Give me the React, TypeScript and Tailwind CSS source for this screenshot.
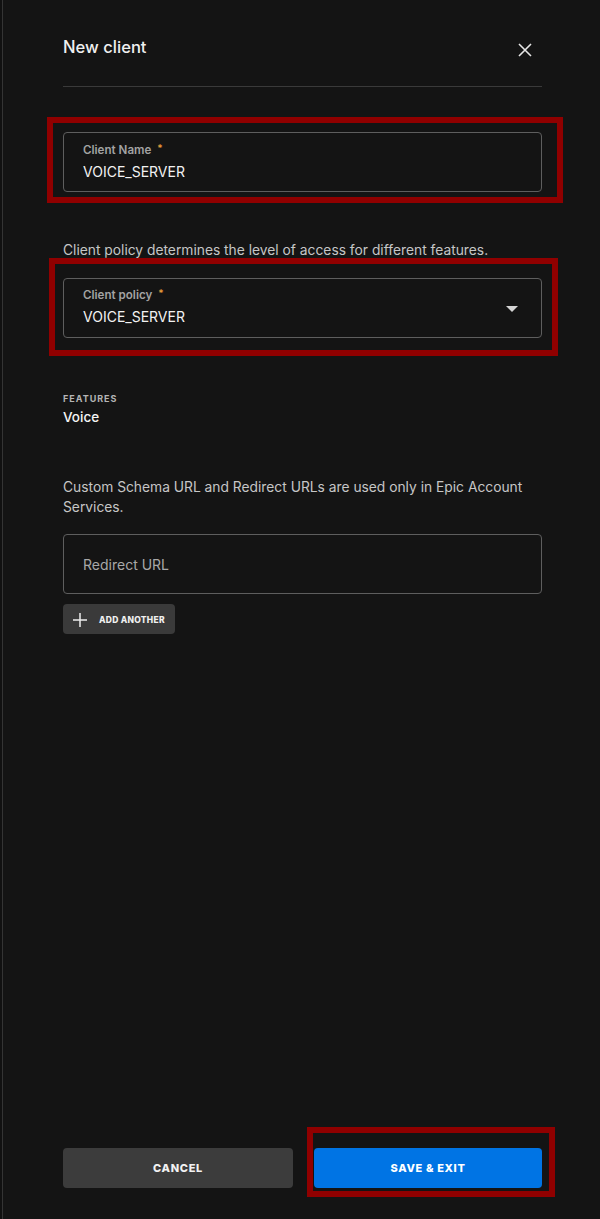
import { useState } from "react"

const font = { fontFamily: "Inter, 'Noto Sans', 'Liberation Sans', sans-serif" }

function Highlight({ className }: { className: string }) {
  return (
    <div
      className={`pointer-events-none absolute border-[6px] border-[#900000] ${className}`}
    />
  )
}

function FieldLabel({ text }: { text: string }) {
  return (
    <div className="flex items-start text-[11.6px] leading-[14px] font-semibold text-[#a3a3a3]">
      {text}
      <span className="ml-[6px] text-[10px] leading-[10px] text-[#e59a3a]">*</span>
    </div>
  )
}

export default function App() {
  const [name, setName] = useState("VOICE_SERVER")

  return (
    <div className="flex h-[1219px] bg-[#141414]" style={font}>
      <div className="w-[2px] bg-[#111111]" />
      <div className="w-px bg-[#343434]" />
      <div className="flex flex-1 flex-col pr-[58px] pl-[60px]">
        {/* header */}
        <div className="flex items-start justify-between pt-[37px]">
          <h2 className="text-[16.6px] leading-[20px] font-medium text-[#f0f0f0]">
            New client
          </h2>
          <button className="mt-[6px] mr-[10px] text-[#e6e6e6]">
            <svg width="14" height="14" viewBox="0 0 14 14" fill="none">
              <path
                d="M1 1L13 13M13 1L1 13"
                stroke="currentColor"
                strokeWidth="1.6"
              />
            </svg>
          </button>
        </div>
        <div className="mt-[29px] h-px bg-[#3a3a3a]" />

        {/* client name */}
        <div className="relative mt-[45px]">
          <Highlight className="-top-[15px] -right-[21px] -bottom-[11px] -left-[16px]" />
          <div className="flex h-[60px] flex-col rounded-[4px] border border-[#5e5e5e] px-[19px] pt-[10px]">
            <FieldLabel text="Client Name" />
            <input
              value={name}
              onChange={(e) => setName(e.target.value)}
              className="mt-[5px] bg-transparent text-[14px] leading-[20px] text-[#f2f2f2] outline-none"
            />
          </div>
        </div>

        <p className="mt-[48px] text-[13.8px] leading-[20px] text-[#c6c6c6]">
          Client policy determines the level of access for different features.
        </p>

        {/* client policy */}
        <div className="relative mt-[18px]">
          <Highlight className="-top-[20px] -right-[16px] -bottom-[18px] -left-[14px]" />
          <div className="flex h-[60px] items-center rounded-[4px] border border-[#5e5e5e] pr-[23px] pl-[19px]">
            <div className="flex flex-1 flex-col pb-[1px]">
              <FieldLabel text="Client policy" />
              <span className="mt-[5px] text-[14px] leading-[20px] text-[#f2f2f2]">
                VOICE_SERVER
              </span>
            </div>
            <svg width="12" height="6" viewBox="0 0 12 6" className="mt-[2px]">
              <path d="M0 0H12L6 6Z" fill="#d4d4d4" />
            </svg>
          </div>
        </div>

        {/* features */}
        <div className="mt-[55px] text-[9px] leading-[12px] font-bold tracking-[0.11em] text-[#b5b5b5]">
          FEATURES
        </div>
        <div className="mt-[2px] text-[13.5px] leading-[20px] font-medium text-[#f4f4f4]">
          Voice
        </div>

        <p className="mt-[50px] text-[13.8px] leading-[20px] text-[#c6c6c6]">
          Custom Schema URL and Redirect URLs are used only in Epic Account
          Services.
        </p>

        <div className="mt-[17px] flex h-[60px] items-center rounded-[4px] border border-[#5e5e5e] px-[19px]">
          <input
            placeholder="Redirect URL"
            className="w-full bg-transparent text-[14px] text-[#f2f2f2] outline-none placeholder:text-[#a8a8a8]"
          />
        </div>

        <button className="mt-[10px] flex h-[30px] w-[112px] items-center gap-[11px] rounded-[4px] bg-[#3a3a3a] pt-[2px] pl-[9px]">
          <svg width="16" height="16" viewBox="0 0 16 16" fill="none">
            <path d="M8 1V15M1 8H15" stroke="#ededed" strokeWidth="1.5" />
          </svg>
          <span className="text-[8.5px] leading-none font-extrabold tracking-[0.03em] text-[#f0f0f0]">
            ADD ANOTHER
          </span>
        </button>

        {/* footer */}
        <div className="mt-auto flex gap-[21px] pb-[31px]">
          <button className="h-[40px] w-[230px] rounded-[4px] bg-[#3c3c3c] text-[11px] font-extrabold tracking-[0.06em] text-[#f2f2f2]">
            CANCEL
          </button>
          <div className="relative flex-1">
            <Highlight className="-top-[21px] -right-[13px] -bottom-[9px] -left-[7px]" />
            <button className="h-[40px] w-full rounded-[4px] bg-[#0074e4] text-[11px] font-extrabold tracking-[0.06em] text-white">
              SAVE &amp; EXIT
            </button>
          </div>
        </div>
      </div>
    </div>
  )
}
